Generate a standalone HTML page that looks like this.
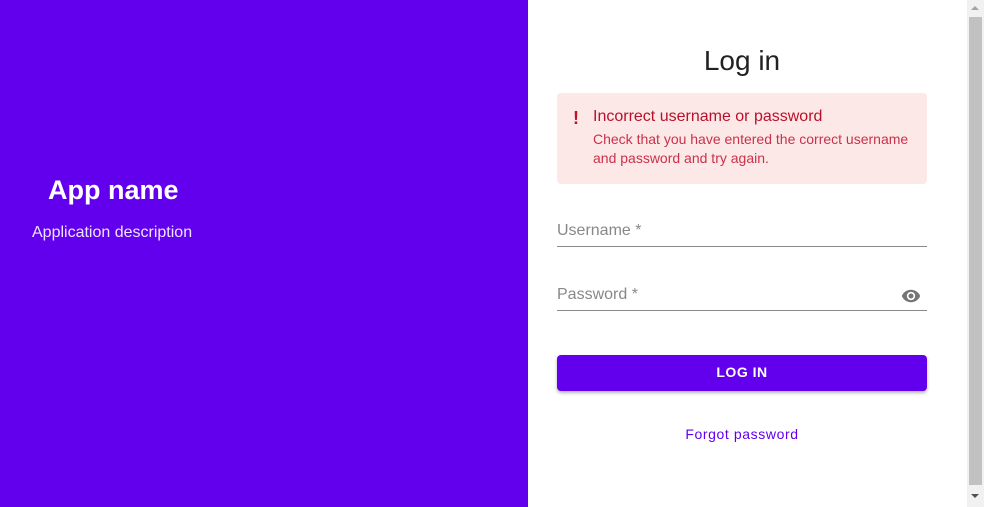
<!DOCTYPE html>
<html><head><style>
*{margin:0;padding:0;box-sizing:border-box}
body{width:984px;height:507px;overflow:hidden;font-family:"Liberation Sans",Arial,sans-serif;background:#fff;position:relative}
.left{position:absolute;left:0;top:0;width:528px;height:507px;background:#6200ee;color:#fff}
.t{position:absolute;font-weight:bold}
.sb{position:absolute;left:967px;top:0;width:17px;height:507px;background:#f1f1f1}
.th{position:absolute;left:969px;top:17px;width:13px;height:468px;background:#c1c1c1}
.a{position:absolute;width:0;height:0;border-left:4px solid transparent;border-right:4px solid transparent;left:971px}
</style></head><body>
<div class="left">
<div class="t" style="left:48px;top:175px;font-size:27px">App name</div>
<div style="position:absolute;left:32px;top:224px;font-size:16px;color:#ede4ff">Application description</div>
</div>
<div style="position:absolute;left:557px;width:370px;top:45px;text-align:center;font-size:28px;color:#222">Log in</div>
<div style="position:absolute;left:557px;top:93px;width:370px;height:91px;background:#fde8e8;border-radius:4px">
<div style="position:absolute;left:16px;top:15px;color:#c0102c;font-weight:bold;font-size:18px">!</div>
<div style="position:absolute;left:36px;top:15px;color:#b8102a;font-size:16px">Incorrect username or password</div>
<div style="position:absolute;left:36px;top:37px;color:#c8324a;font-size:14px;line-height:19px">Check that you have entered the correct username<br>and password and try again.</div>
</div>
<div style="position:absolute;left:557px;top:222px;font-size:16px;color:#888">Username *</div>
<div style="position:absolute;left:557px;top:246px;width:370px;height:1px;background:#8a8a8a"></div>
<div style="position:absolute;left:557px;top:286px;font-size:16px;color:#888">Password *</div>
<svg style="position:absolute;left:900px;top:286px" width="22" height="20" viewBox="0 0 24 24"><path fill="#757575" d="M12 4.5C7 4.5 2.7 7.6 1 12c1.7 4.4 6 7.5 11 7.5s9.3-3.1 11-7.5c-1.7-4.4-6-7.5-11-7.5zM12 17a5 5 0 1 1 0-10 5 5 0 0 1 0 10zm0-8a3 3 0 1 0 0 6 3 3 0 0 0 0-6z"/></svg>
<div style="position:absolute;left:557px;top:310px;width:370px;height:1px;background:#8a8a8a"></div>
<div style="position:absolute;left:557px;top:355px;width:370px;height:36px;background:#6200ee;border-radius:4px;box-shadow:0 2px 3px rgba(0,0,0,.3);color:#fff;font-weight:bold;font-size:14px;letter-spacing:.5px;text-align:center;line-height:34px">LOG IN</div>
<div style="position:absolute;left:557px;width:370px;top:426px;text-align:center;font-size:14px;color:#6200ee;letter-spacing:.6px">Forgot password</div>
<div class="sb"></div><div class="th"></div>
<div class="a" style="top:6px;border-bottom:4px solid #a3a3a3"></div>
<div class="a" style="top:494px;border-top:4px solid #505050"></div>
</body></html>
